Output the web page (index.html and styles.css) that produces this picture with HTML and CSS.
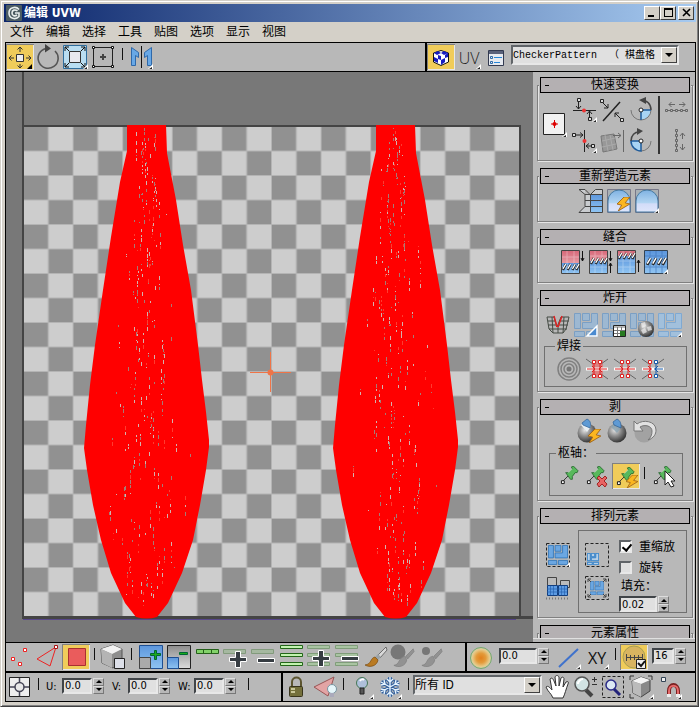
FILE: index.html
```html
<!DOCTYPE html>
<html lang="zh-CN">
<head>
<meta charset="utf-8">
<title>编辑 UVW</title>
<link rel="stylesheet" href="styles.css">
</head>
<body>
<svg class="defs" aria-hidden="true">
  <defs>
    <linearGradient id="gBlue" x1="0" y1="0" x2="0" y2="1"><stop offset="0" stop-color="#5c96dc"/><stop offset="1" stop-color="#8fc4f2"/></linearGradient>
    <linearGradient id="gDome" x1="0" y1="0" x2="0" y2="1"><stop offset="0" stop-color="#7fb2e2"/><stop offset=".6" stop-color="#b4d6f2"/><stop offset=".62" stop-color="#d2dcf8"/><stop offset="1" stop-color="#dfe6fb"/></linearGradient>
    <linearGradient id="gGrey" x1="0" y1="0" x2="0" y2="1"><stop offset="0" stop-color="#8c8c8c"/><stop offset="1" stop-color="#dcdcdc"/></linearGradient>
    <linearGradient id="gPink" x1="0" y1="0" x2="0" y2="1"><stop offset="0" stop-color="#d8697a"/><stop offset="1" stop-color="#e59aa2"/></linearGradient>
    <radialGradient id="gBall" cx=".38" cy=".35" r=".7"><stop offset="0" stop-color="#e4e4e4"/><stop offset=".5" stop-color="#858585"/><stop offset="1" stop-color="#2c2c2c"/></radialGradient>
    <radialGradient id="gSun"><stop offset="0" stop-color="#e2801c"/><stop offset=".45" stop-color="#e39a3a"/><stop offset=".8" stop-color="#e6c886"/><stop offset="1" stop-color="#c9d0b0"/></radialGradient>
    <symbol id="fly" viewBox="0 0 28 26"><path d="M26 20v5h-5z" fill="#fff"/><path d="M25 23v2h-3z" fill="#222"/></symbol>
    <symbol id="bolt" viewBox="0 0 12 12"><path d="M6 0 0 6l4 1-3 5 10-6-4-1 4-5z" fill="#fbb61f" stroke="#a3661a" stroke-width=".8"/></symbol>
    <symbol id="pin" viewBox="0 0 20 20"><path d="M2 17 9 10" stroke="#333"/><path d="M1.500 15.500h3v3h-3z" fill="#fff" stroke="#111"/><path d="M6 7l3 0 4-4-1-2 2-1 5 5-1 2-2 0-3 4 0 3-2 0z" fill="#58b95c" stroke="#1c5e25" stroke-width=".8"/><path d="m9 7 4-4" stroke="#b6eab4"/></symbol>
    <symbol id="tiles" viewBox="0 0 24 24"><path d="M.5.5h6v15h-6zM8.500.5h7v7h-7zM17.500.5h6v15h-15v-6h9zM.5 18.500h10v5h-10zM12.500 18.500h11v5h-11z"/></symbol>
    <symbol id="brush" viewBox="0 0 24 24"><path d="M22 2 14 10l2 3 7-8z" fill="#d8d8d8" stroke="#555" stroke-width=".8"/><path d="m14 9-3 3 3 3 3-3z" fill="#9ba3a8"/><path d="M11 12c-5 1-3 7-10 8 5 3 12 1 13-5z" fill="#b97a22" stroke="#7a4b10" stroke-width=".7"/></symbol>
    <symbol id="gbrush" viewBox="0 0 24 24"><path d="M22 2 14 10l2 3 7-8zM13 10c-8 2-5 9-12 10 5 3 13 1 14-6z" fill="#929292" stroke="#808080" stroke-width=".8"/></symbol>
    <symbol id="bars" viewBox="0 0 24 24"><path d="M.5 1.500h22v3H.5zM.5 9.500h22v3H.5zM.5 18.500h22v3H.5z"/></symbol>
    <symbol id="plus" viewBox="0 0 20 20"><path d="M7.500 1.500h5v6h6v4h-6v6h-5v-6h-6v-4h6z" fill="#363c42" stroke="#fff"/></symbol>
    <symbol id="minus" viewBox="0 0 20 20"><path d="M1.500 8.500h17v4h-17z" fill="#363c42" stroke="#fff"/></symbol>
    <symbol id="weld" viewBox="0 0 24 24"><path d="m1 2 7 5M23 2l-7 5M1 22l7-5M23 22l-7-5" stroke="#666" fill="none"/><path d="M1 12h22" stroke="#fff" stroke-width="3"/></symbol>
    <symbol id="stitches" viewBox="0 0 20 8"><g stroke="#222" stroke-width="2.600"><path d="m2 7 3-6M7 7l3-6M12 7l3-6M16 7l3-6"/></g><g stroke="#fff" stroke-width="1.300"><path d="m2 6 3-5M7 6l3-5M12 6l3-5M16 6l3-5"/></g></symbol>
  </defs>
</svg>

<div class="window">
  <header class="titlebar">
    <svg class="logo" viewBox="0 0 16 16"><rect width="16" height="16" rx="1" fill="#4b5b62"/><path d="M13 4.500C10 1 3 2 3 8s7 7 10 3.500V8H9M11.500 6C9 4 6 5 6 8s3 3.500 5 2" fill="none" stroke="#e8eeee" stroke-width="1.600"/></svg>
    <h1>编辑 UVW</h1>
    <div class="winbtns">
      <button aria-label="最小化"><svg viewBox="0 0 12 10"><path d="M2 7h6v2H2z"/></svg></button><button aria-label="最大化"><svg viewBox="0 0 12 10"><path d="M2 0h9v9H2zM3 2v6h7V2z" fill-rule="evenodd"/></svg></button><button class="close" aria-label="关闭"><svg viewBox="0 0 12 10"><path d="m3 1 7 7M10 1 3 8" stroke="#000" stroke-width="1.600"/></svg></button>
    </div>
  </header>
  <nav class="menu">
    <button>文件</button><button>编辑</button><button>选择</button><button>工具</button><button>贴图</button><button>选项</button><button>显示</button><button>视图</button>
  </nav>

  <main class="client">
    <div class="bar">
      <div class="group grow">
        <button class="ic on" aria-label="移动"><svg viewBox="0 0 28 26"><g stroke="#333" fill="none"><path d="M10.500 10.500h7v7h-7z" fill="#eee"/><path d="M14 8V3M14 20v4M8 14H3M20 14h5M11.500 5.500 14 3l2.500 2.500M11.500 21.500 14 24l2.500-2.500M5.500 11.500 3 14l2.500 2.500M22.500 11.500 25 14l-2.500 2.500"/></g><path d="M26 20v5h-5z"/></svg></button>
        <button class="ic" aria-label="旋转"><svg viewBox="0 0 28 26"><path d="M21 7a10 10 0 1 1-9-2.500h3" fill="none" stroke="#555" stroke-width="1.600"/><path d="m11 0 6 4.500-6 4z" fill="#444"/></svg></button>
        <button class="ic" aria-label="缩放"><svg viewBox="0 0 28 26"><path d="M1.500 1.500h23v23h-23z" fill="#b9ddf1" stroke="#2f6d9c"/><path d="M7.500 7.500h11v11h-11z" fill="#e8e8ee" stroke="#333"/><path d="m7 7-4-4M19 7l4-4M7 19l-4 4M19 19l4 4M3 7V3h4M19 3h4v4M3 19v4h4M19 23h4v-4" stroke="#111" fill="none"/><use href="#fly"/></svg></button>
        <button class="ic" aria-label="自由形式"><svg viewBox="0 0 28 26"><path d="M3.500 3.500h19v19h-19z" fill="none" stroke="#222"/><path d="M2.500 2.500h2v2h-2zM21.500 2.500h2v2h-2zM2.500 21.500h2v2h-2zM21.500 21.500h2v2h-2z" fill="#fff" stroke="#111"/><path d="M13 10v6M10 13h6" stroke="#444" stroke-width="2"/></svg></button>
        <i class="sep"></i>
        <button class="ic" aria-label="镜像"><svg viewBox="0 0 28 26"><path d="M4.500 3.500l7 5v5l-3-2v10h-4zM24.500 3.500l-7 5v5l3-2v10h4z" fill="#68a8e6" stroke="#2f69aa"/><path d="M14.500 2v22" stroke="#111"/><use href="#fly"/></svg></button>
      </div>
      <div class="group tex">
        <button class="ic on" aria-label="显示贴图"><svg viewBox="0 0 28 26"><path d="M14 6.500 21.500 9v9L14 21.500 6.500 18V9z" fill="#fff" stroke="#111"/><path d="m7 9 4-2 3 2-4 2zM14 9l3-2 4 2-4 2zM7 13l4 2v4l-4-2zM11 11l3 1v4l-3-1zM14 16l4-2v4l-4 3zM18 11l3-2v4l-3 1z" fill="#171cc0"/></svg></button>
        <button class="ic txt"><span>UV</span><svg class="over" viewBox="0 0 28 26"><use href="#fly"/></svg></button>
        <button class="ic" aria-label="列表"><svg viewBox="0 0 28 26"><path d="M5.500 6.500h15v15h-15z" fill="#e6eaf0" stroke="#333a50"/><path d="M6 7h14v3H6z" fill="#59617a"/><path d="M7.500 12.500h2v2h-2zM7.500 17.500h2v2h-2z" fill="none" stroke="#2d6aa8"/><path d="M11 13.500h8M11 18.500h6" stroke="#2686d8"/></svg></button>
        <div class="pick mono"><select aria-label="贴图"><option>CheckerPattern&nbsp; （ 棋盘格</option></select><b></b></div>
      </div>
    </div>

    <div class="work">
      <svg class="canvas" viewBox="6 72 527 570" preserveAspectRatio="xMinYMin slice">
        <defs>
          <pattern id="chk" x="24" y="127" width="49.600" height="49" patternUnits="userSpaceOnUse"><path d="M0 0h50v49H0z" fill="#b4b4b4"/><path d="M0 0h23.600v23.500H0zM25 24.500h23.600V48H25z" fill="#919191"/><path d="M25 0h23.600v23.500H25zM0 24.500h23.600V48H0z" fill="#cdcdcd"/></pattern>
          <path id="leaf" d="M127 125h39l1 28 9 47 7 45 8 45 7 55 4 35 4 32 3 28v7l-3 23-6 35-7 35-11 33-14 30-11 14q-10 3-21 0l-11-14-14-30-10-33-8-35-6-35-3-22 2-23 4-40 5-40 8-55 8-53 9-55 7-31z"/>
        </defs>
        <path d="M6 72h527v570H6z" fill="#787878"/>
        <path d="M24 127h495v490H24z" fill="url(#chk)"/>
        <g fill="#444"><path d="M22 72h2v547h-2zM22 125h499v2H22zM519 125h2v494h-2zM22 616h511v3H22z"/></g>
        <path d="M23 619.500h493" stroke="#57478a"/>
        <g fill="#f00"><use href="#leaf"/><use href="#leaf" x="249"/></g>
        <g id="speckles"></g>
        <path d="M250 372.500h41M270.500 352v40" stroke="#ef7447"/><circle cx="270.500" cy="372.500" r="3" fill="#ef7447"/>
      </svg>

      <aside class="panel">
        <section class="roll">
          <h2><button>快速变换</button></h2>
          <div class="quick">
            <button class="ic tall" aria-label="中心"><svg viewBox="0 0 28 26"><path d="M2.500 1.500h21v21h-21z" fill="#f1f1f1" stroke="#222"/><path d="M13.500 8v8M10 12h7" stroke="#d00"/><circle cx="13.500" cy="12" r="2" fill="#d00"/><use href="#fly"/></svg></button>
            <button class="ic" aria-label="水平对齐"><svg viewBox="0 0 28 26"><path d="M2 13.500h23M7.500 4v8M5 9l2.500 3L10 9M18.500 21v-7M16 17l2.500-3 2.500 3" stroke="#222" fill="none"/><path d="M6.500 1.500h3v3h-3zM17.500 20.500h3v3h-3z" fill="#ddd" stroke="#222"/><circle cx="13" cy="13.500" r="2" fill="#e33"/><use href="#fly"/></svg></button>
            <button class="ic" aria-label="线性对齐"><svg viewBox="0 0 28 26"><path d="m4 24 17-19" stroke="#222" stroke-width="1.500"/><path d="m3 5 6 6M5 11h4V7M22 22l-6-6M16 20v-4h4" stroke="#222" fill="none"/><path d="M1.500 2.500h3v3h-3zM21.500 21.500h3v3h-3z" fill="#ddd" stroke="#222"/></svg></button>
            <button class="ic" aria-label="逆时针旋转"><svg viewBox="0 0 28 26"><path d="M14 13h10a10 10 0 0 1-10 10z" fill="#a8d4f4"/><path d="M4 13a10 10 0 0 0 20 0" stroke="#777" fill="none"/><path d="M14 23V13h10" stroke="#1e5b9a" fill="none" stroke-width="1.500"/><path d="M24 13c0-6-4-10-10-10" stroke="#444" fill="none" stroke-width="1.500"/><path d="m12 3 7-3v7z" fill="#444"/><circle cx="14" cy="13" r="2" fill="#fff" stroke="#222"/></svg></button>
            <i class="vbar"></i>
            <button class="ic" aria-label="水平间隔"><svg viewBox="0 0 28 26"><g stroke="#666" fill="none"><path d="M6 7.500h6M8.500 5 6 7.500 8.500 10M16 7.500h6M19.500 5 22 7.500 19.500 10M5 13.500h18"/><path fill="#bbb" d="M2.500 12.500h2v2h-2zM7.500 12.500h2v2h-2zM12.500 12.500h2v2h-2zM17.500 12.500h2v2h-2zM22.500 12.500h2v2h-2z"/></g></svg></button>
            <button class="ic" aria-label="垂直对齐"><svg viewBox="0 0 28 26"><path d="M13.500 2v22M4 7h8M9 4.500 12 7 9 9.500M22 18h-7M18 15.500 15 18l3 2.500" stroke="#222" fill="none"/><path d="M1.500 5.500h3v3h-3zM20.500 16.500h3v3h-3z" fill="#ddd" stroke="#222"/><circle cx="13.500" cy="13" r="2" fill="#e33"/><use href="#fly"/></svg></button>
            <button class="ic" aria-label="对齐到边"><svg viewBox="0 0 28 26"><path d="m2 8 13-2 3 15-14 3z" fill="#989898" stroke="#777"/><path d="m6 7 3 16M11 7l3 15M3 13l13-3M3 19l14-3" stroke="#aaa"/><path d="M14 7.500h8M19 5l3 2.500-3 2.500M24.500 2v22" stroke="#666" fill="none"/></svg></button>
            <button class="ic" aria-label="顺时针旋转"><svg viewBox="0 0 28 26"><path d="M14 13v10A10 10 0 0 1 4 13z" fill="#a8d4f4"/><path d="M24 13a10 10 0 0 1-10 10" stroke="#777" fill="none"/><path d="M4 13a10 10 0 0 0 10 10V13z" stroke="#1e5b9a" fill="none" stroke-width="1.500"/><path d="M4 13C4 7 8 4 12 4" stroke="#444" fill="none" stroke-width="1.500"/><path d="m16 3-6-3v7z" fill="#444"/><circle cx="14" cy="13" r="2" fill="#fff" stroke="#222"/></svg></button>
            <button class="ic" aria-label="垂直间隔"><svg viewBox="0 0 28 26"><g stroke="#666" fill="none"><path d="M19.500 11V5M17 8l2.500-3L22 8M19.500 16v6M17 19l2.500 3 2.500-3M13.500 3v19"/><path fill="#bbb" d="M12.500 1.500h2v2h-2zM12.500 6.500h2v2h-2zM12.500 11.500h2v2h-2zM12.500 16.500h2v2h-2zM12.500 21.500h2v2h-2z"/></g></svg></button>
          </div>
        </section>

        <section class="roll">
          <h2><button>重新塑造元素</button></h2>
          <div class="row reshape">
            <button class="ic" aria-label="拉直"><svg viewBox="0 0 28 26"><path d="M13 6h12v18H13z" fill="url(#gBlue)"/><path d="M8 1.500 2 1.500l6 5v12l-6 6h11v-18H8M25.500 1.500h-7l-5 5h12z" fill="#d0d4d8" opacity=".7"/><path d="M2 1.500h6l5 5M25.500 1.500h-7l-5 5v18h12zM2 1.500l6 5v12l-6 6h11M8 6.500h17M8 12.500h17M8 18.500h17" fill="none" stroke="#444"/></svg></button>
            <button class="ic" aria-label="自动松弛"><svg viewBox="0 0 28 26"><path d="M2.500 1.500h23v23h-23z" fill="#a9b1b6" stroke="#778"/><path d="M3 24V13a11 11 0 0 1 22 0v11z" fill="url(#gDome)" stroke="#47799f"/><use href="#bolt" x="12" y="9" width="14" height="14"/></svg></button>
            <button class="ic" aria-label="松弛"><svg viewBox="0 0 28 26"><path d="M2.500 1.500h23v23h-23z" fill="#a9b1b6" stroke="#778"/><path d="M3 24V13a11 11 0 0 1 22 0v11z" fill="url(#gDome)" stroke="#47799f"/><use href="#fly"/></svg></button>
          </div>
        </section>

        <section class="roll">
          <h2><button>缝合</button></h2>
          <div class="row stitch">
            <button class="ic" aria-label="缝合到目标"><svg viewBox="0 0 28 26"><path d="M3 2h19v12H3z" fill="url(#gPink)"/><path d="M3 14h19v10H3z" fill="url(#gBlue)"/><path d="M9 2v22M16 2v22M3 8h19M3 18h19" stroke="#fff" opacity=".3"/><path d="M3.500 1.500h18v23h-18z" fill="none" stroke="#444"/><use href="#stitches" x="3" y="14" width="19" height="8"/><path d="M24.500 2v10M23 9l1.500 3L26 9" stroke="#111" fill="none"/></svg></button>
            <button class="ic" aria-label="缝合到平均"><svg viewBox="0 0 28 26"><path d="M3 2h19v11H3z" fill="url(#gPink)"/><path d="M3 12h19v12H3z" fill="url(#gBlue)"/><path d="M9 2v22M16 2v22M3 7h19M3 18h19" stroke="#fff" opacity=".3"/><path d="M3.500 1.500h18v23h-18z" fill="none" stroke="#444"/><use href="#stitches" x="3" y="8" width="19" height="8"/><path d="M24.500 2v10M23 9l1.500 3L26 9M24.500 24V14M23 17l1.500-3 1.500 3" stroke="#111" fill="none"/></svg></button>
            <button class="ic" aria-label="缝合到源"><svg viewBox="0 0 28 26"><path d="M3 2h19v7H3z" fill="url(#gPink)"/><path d="M3 7h19v17H3z" fill="url(#gBlue)"/><path d="M9 2v22M16 2v22M3 12h19M3 18h19" stroke="#fff" opacity=".3"/><path d="M3.500 1.500h18v23h-18z" fill="none" stroke="#444"/><use href="#stitches" x="3" y="3" width="19" height="8"/><path d="M24.500 23V11M23 14l1.500-3 1.500 3" stroke="#111" fill="none"/></svg></button>
            <button class="ic" aria-label="缝合自定义"><svg viewBox="0 0 28 26"><path d="M2.500 1.500h23v23h-23z" fill="url(#gBlue)" stroke="#345"/><path d="M8 2v22M14 2v22M20 2v22M3 7h22M3 18h22" stroke="#3a70b8" opacity=".6"/><use href="#stitches" x="3" y="8" width="22" height="9"/><use href="#fly"/></svg></button>
          </div>
        </section>

        <section class="roll">
          <h2><button>炸开</button></h2>
          <div class="row explode">
            <button class="ic" aria-label="断开"><svg viewBox="0 0 28 26"><path d="M3 5h7l3 10 4-10h8l-3 12-3 4H9l-4-4zM4 9h7M4 13h8M5 17h18M16 9h9M15 13h9M8 5l1 16M14 14v7M20 5l-1 16" fill="none" stroke="#444b44"/><path d="m10 4 3 11M18 4l-4 11" stroke="#d22" stroke-width="1.500"/></svg></button>
            <button class="ic" aria-label="按多边形角度展平"><svg viewBox="0 0 28 26"><use href="#tiles" x="2" y="1" width="24" height="24" fill="#9db8d2" stroke="#7b9fc4"/><path d="m15 24 10-10v10z" fill="#4a8ad0" stroke="#fff" stroke-width="1.500"/></svg></button>
            <button class="ic" aria-label="按平滑组展平"><svg viewBox="0 0 28 26"><use href="#tiles" x="2" y="1" width="24" height="24" fill="#9db8d2" stroke="#7b9fc4"/><path d="M13.500 13.500h12v11h-12z" fill="#fff" stroke="#222"/><path d="M14 14h11v2H14z" fill="#bbb"/><path d="M17.500 15v9M21.500 15v9M14 18.500h11M14 21.500h11" stroke="#777"/><path d="M20 19h5v5h-5z" fill="#287a20"/></svg></button>
            <button class="ic" aria-label="按材质展平"><svg viewBox="0 0 28 26"><use href="#tiles" x="2" y="1" width="24" height="24" fill="#9db8d2" stroke="#7b9fc4"/><circle cx="18" cy="17" r="8" fill="url(#gBall)"/><path d="m13 11 4-1 1 4-4 2zM19 15l4-1 1 4-4 1zM13 18l4-2 2 4-4 2z" fill="#eee" opacity=".7"/></svg></button>
            <button class="ic" aria-label="展平自定义"><svg viewBox="0 0 28 26"><use href="#tiles" x="2" y="1" width="24" height="24" fill="#a2c0dc" stroke="#7fa9d2"/><use href="#fly"/></svg></button>
          </div>
          <fieldset class="weld"><legend>焊接</legend>
            <button class="ic" aria-label="目标焊接"><svg viewBox="0 0 28 26"><g fill="none" stroke="#808080" stroke-width="1.500"><circle cx="14" cy="13" r="11"/><circle cx="14" cy="13" r="8"/><circle cx="14" cy="13" r="5"/></g><circle cx="14" cy="13" r="2.500" fill="#777"/></svg></button>
            <button class="ic" aria-label="焊接选定项"><svg viewBox="0 0 28 26"><path d="M9 4h11v18H9z" fill="#dc8080"/><use href="#weld" x="2" y="1" width="24" height="24"/><path d="M4 13h20M9 10l3 3-3 3M19 10l-3 3 3 3M11 6v14M17 6v14" stroke="#e02020" fill="none"/><path d="M9.500 4.500h3v3h-3zM15.500 4.500h3v3h-3zM9.500 18.500h3v3h-3zM15.500 18.500h3v3h-3z" fill="#fff" stroke="#d22"/></svg></button>
            <button class="ic" aria-label="焊接所有选定接缝"><svg viewBox="0 0 28 26"><use href="#weld" x="2" y="1" width="24" height="24"/><path d="M4 13h20M9 10l3 3-3 3M19 10l-3 3 3 3M11 6v14M17 6v14" stroke="#e02020" fill="none"/><path d="M9.500 4.500h3v3h-3zM15.500 4.500h3v3h-3zM9.500 18.500h3v3h-3zM15.500 18.500h3v3h-3z" fill="#fff" stroke="#d22"/></svg></button>
            <button class="ic" aria-label="焊接任意"><svg viewBox="0 0 28 26"><use href="#weld" x="2" y="1" width="24" height="24"/><path d="M4 13h9M9 10l3 3-3 3M11 6v14" stroke="#e02020" fill="none"/><path d="M24 13h-9M19 10l-3 3 3 3M17 6v14" stroke="#1558a8" fill="none"/><path d="M9.500 4.500h3v3h-3zM9.500 18.500h3v3h-3z" fill="#fff" stroke="#d22"/><path d="M15.500 4.500h3v3h-3zM15.500 18.500h3v3h-3z" fill="#fff" stroke="#1558a8"/></svg></button>
          </fieldset>
        </section>

        <section class="roll">
          <h2><button>剥</button></h2>
          <div class="row peel">
            <button class="ic" aria-label="快速剥"><svg viewBox="0 0 28 26"><circle cx="12" cy="15" r="9.500" fill="url(#gBall)"/><path d="m6 7 5-5c4 1 6 4 4 8l-3 4z" fill="#e8eef2"/><path d="m7 5 5-4c4 2 4 5 3 9L8 7z" fill="#5e9ad4" stroke="#2c5f94" stroke-width=".7"/><use href="#bolt" x="13" y="11" width="14" height="14"/></svg></button>
            <button class="ic" aria-label="剥模式"><svg viewBox="0 0 28 26"><circle cx="14" cy="15" r="9.500" fill="url(#gBall)"/><path d="m8 9 6-7c3 2 5 5 3 9l-3 4z" fill="#89a3b0" opacity=".8"/><path d="m10 4 4-3c4 2 4 5 4 9l-7-3z" fill="#5e9ad4" stroke="#2c5f94" stroke-width=".7"/></svg></button>
            <button class="ic" aria-label="重置剥"><svg viewBox="0 0 28 26"><circle cx="13" cy="15" r="9.500" fill="#999" opacity=".7"/><path d="M3 3v10h9L9 9c5-3 12-1 12 4 0 4-1 6-4 9 6-2 8-6 8-10C25 3 12 1 6 6z" fill="#e2e2e2" stroke="#777"/></svg></button>
          </div>
          <fieldset class="pivot"><legend>枢轴：</legend>
            <button class="ic" aria-label="锁定枢轴"><svg viewBox="0 0 28 26"><use href="#pin" x="4" y="3" width="19" height="19"/></svg></button>
            <button class="ic" aria-label="解除枢轴"><svg viewBox="0 0 28 26"><use href="#pin" x="2" y="3" width="19" height="19"/><path d="m13 15 2-2 3 3 3-3 2 2-3 3 3 3-2 3-3-3-3 3-2-3 3-3z" fill="#e86464" stroke="#a12323"/></svg></button>
            <button class="ic on" aria-label="自动枢轴"><svg viewBox="0 0 28 26"><use href="#pin" x="4" y="4" width="19" height="19"/><use href="#bolt" x="14" y="12" width="13" height="13"/></svg></button>
            <i class="sep"></i>
            <button class="ic" aria-label="选择枢轴"><svg viewBox="0 0 28 26"><use href="#pin" x="4" y="3" width="19" height="19"/><path d="M16 8v14l3-3 3 5 3-1-3-5h4z" fill="#fff" stroke="#222"/></svg></button>
          </fieldset>
        </section>

        <section class="roll">
          <h2><button>排列元素</button></h2>
          <div class="pack">
            <div class="col">
              <button class="ic" aria-label="紧缩自定义"><svg viewBox="0 0 28 26"><path d="M2.500 1.500h23v23h-23z" fill="none" stroke="#222" stroke-dasharray="3 2"/><use href="#tiles" x="4" y="3" width="20" height="20" fill="#6ba7e2" stroke="#2e73b8"/><use href="#fly"/></svg></button>
              <button class="ic" aria-label="重缩放元素"><svg viewBox="0 0 28 26"><path d="M3.500 2.500h9v8h-9zM16.500 5.500h9v7h-9z" fill="#bbb" stroke="#444"/><path d="M3.500 10.500h10v10h-10zM14.500 10.500h9v10h-9z" fill="#5d9ce4" stroke="#123f80"/><path d="M3 14h20M3 17h20M6.500 11v9M9.500 11v9M17.500 11v9M20.500 11v9" stroke="#2562b0" stroke-width=".7"/><path d="M2 23.500h24" stroke="#777" stroke-width="2" stroke-dasharray="1 2"/></svg></button>
            </div>
            <div class="box">
              <div class="col">
                <button class="ic" aria-label="紧缩一起"><svg viewBox="0 0 28 26"><path d="M2.500 1.500h23v23h-23z" fill="none" stroke="#222" stroke-dasharray="3 2"/><use href="#tiles" x="4" y="11" width="12" height="12" fill="#b6cfe6" stroke="#2e80cc" stroke-width="2"/></svg></button>
                <button class="ic" aria-label="紧缩规格化"><svg viewBox="0 0 28 26"><path d="M2.500 1.500h23v23h-23z" fill="none" stroke="#222" stroke-dasharray="3 2"/><use href="#tiles" x="7" y="6" width="14" height="14" fill="#6ba7e2" stroke="#2e73b8"/><path d="m5 4 3 3M23 4l-3 3M5 22l3-3M23 22l-3-3M5 7V4h3M20 4h3v3M5 19v3h3M23 19v3h-3" fill="none" stroke="#444"/></svg></button>
              </div>
              <div class="opts">
                <label><input type="checkbox" checked>重缩放</label>
                <label><input type="checkbox">旋转</label>
                <label for="pad" class="cap">填充：</label>
                <span class="spin wide"><input id="pad" type="text" value="0.02"><span class="ud"><button aria-label="增大"></button><button aria-label="减小"></button></span></span>
              </div>
            </div>
          </div>
        </section>

        <section class="roll"><h2><button>元素属性</button></h2><div class="row"></div></section>
      </aside>
    </div>

    <div class="bar thick">
      <div class="group grow">
        <button class="ic" aria-label="顶点"><svg viewBox="0 0 28 26"><path d="M17.500 4.500h3v3h-3zM5.500 13.500h3v3h-3zM12.500 18.500h3v3h-3z" fill="#fff" stroke="#e22"/></svg></button>
        <button class="ic" aria-label="边"><svg viewBox="0 0 28 26"><path d="M22 3 3 15l13 7z" fill="none" stroke="#e22"/><path d="M20.500 1.500h3v3h-3z" fill="#fff" stroke="#a11"/></svg></button>
        <button class="ic on" aria-label="多边形"><svg viewBox="0 0 28 26"><path d="M6.500 4.500h17v17h-17z" fill="#ea5c5c" stroke="#a83030"/></svg></button>
        <i class="sep"></i>
        <button class="ic" aria-label="按元素选择"><svg viewBox="0 0 28 26"><path d="m2 5 12-4 9 4v13l-9 6-11-5z" fill="#8e8e8e" stroke="#555"/><path d="m2 5 12-4 9 4-10 5z" fill="#f2f2f2"/><path d="M2 5l11 5v14L3 19z" fill="#b4b4b4"/><path d="M15.500 14.500h10v10h-10z" fill="#dcdfe8" stroke="#222"/></svg></button>
        <i class="sep"></i>
        <button class="ic" aria-label="扩大选择"><svg viewBox="0 0 28 26"><path d="M3.500 1.500h23v23h-23z" fill="url(#gBlue)" stroke="#1e4f92"/><path d="M3.500 13.500h11v11h-11z" fill="#aaa" stroke="#444"/><path d="M18.500 6.500h2v3h4v2h-4v4h-2v-4h-4v-2h4z" fill="#1cab1c" stroke="#063"/></svg></button>
        <button class="ic" aria-label="收缩选择"><svg viewBox="0 0 28 26"><path d="M3.500 1.500h23v23h-23z" fill="url(#gGrey)" stroke="#222"/><path d="M3.500 13.500h11v11h-11z" fill="url(#gBlue)" stroke="#1e4f92"/><path d="M15.500 8.500h8v2h-8z" fill="#1cab1c" stroke="#063"/></svg></button>
        <button class="ic" aria-label="循环边"><svg viewBox="0 0 28 26"><path d="M4.500 5.500h22v4h-22z" fill="#82d26a" stroke="#25601a"/><path d="M11.500 5v5M19.500 5v5" stroke="#25601a"/></svg></button>
        <button class="ic" aria-label="扩大循环"><svg viewBox="0 0 28 26"><path d="M3.500 5.500h22v4h-22z" fill="#a5b8a0" stroke="#829a7c"/><use href="#plus" x="8" y="6" width="20" height="20"/></svg></button>
        <button class="ic" aria-label="收缩循环"><svg viewBox="0 0 28 26"><path d="M3.500 5.500h22v4h-22z" fill="#a5b8a0" stroke="#829a7c"/><use href="#minus" x="8" y="6" width="20" height="20"/></svg></button>
        <button class="ic" aria-label="环形边"><svg viewBox="0 0 28 26"><use href="#bars" x="4" y="0" width="24" height="24" fill="#c2f2b0" stroke="#226618"/></svg></button>
        <button class="ic" aria-label="扩大环形"><svg viewBox="0 0 28 26"><use href="#bars" x="3" y="0" width="24" height="24" fill="#a9c4a2" stroke="#7f9c79"/><use href="#plus" x="7" y="5" width="20" height="20"/></svg></button>
        <button class="ic" aria-label="收缩环形"><svg viewBox="0 0 28 26"><use href="#bars" x="3" y="0" width="24" height="24" fill="#a9c4a2" stroke="#7f9c79"/><use href="#minus" x="8" y="4" width="20" height="20"/></svg></button>
        <button class="ic" aria-label="绘制选择"><svg viewBox="0 0 28 26"><use href="#brush" x="4" y="1" width="24" height="24"/></svg></button>
        <button class="ic" aria-label="放大画笔"><svg viewBox="0 0 28 26"><circle cx="10" cy="8" r="7.500" fill="#777"/><use href="#gbrush" x="5" y="3" width="22" height="22"/></svg></button>
        <button class="ic" aria-label="缩小画笔"><svg viewBox="0 0 28 26"><circle cx="10" cy="7" r="4" fill="#777"/><use href="#gbrush" x="5" y="3" width="22" height="22"/></svg></button>
      </div>
      <div class="group soft">
        <button class="ic" aria-label="软选择"><svg viewBox="0 0 28 26"><circle cx="14" cy="14" r="10.500" fill="url(#gSun)" stroke="#76a86e"/></svg></button>
        <span class="spin wide"><input type="text" aria-label="衰减" value="0.0"><span class="ud"><button aria-label="增大"></button><button aria-label="减小"></button></span></span>
        <button class="ic line" aria-label="线性衰减"><svg viewBox="0 0 28 26"><path d="M4 23 23 5" stroke="#3f72cc" stroke-width="2"/><use href="#fly"/></svg></button>
        <button class="ic txt dark"><span>XY</span><svg class="over" viewBox="0 0 28 26"><use href="#fly"/></svg></button>
        <i class="sep"></i>
        <button class="ic on" aria-label="边距离"><svg viewBox="0 0 28 26"><circle cx="14" cy="13" r="11" fill="#d8b460" stroke="#a9a050"/><path d="M6 13.500h16M6.500 10v7M10.500 11v5M14.500 11v5M18.500 11v5M22.500 10v7" stroke="#444"/><path d="M16.500 15.500h9v9h-9z" fill="#eee" stroke="#222"/><path d="m18 19 3 3 4-5" stroke="#111" stroke-width="2" fill="none"/></svg></button>
        <span class="spin narrow"><input type="text" aria-label="步数" value="16"><span class="ud"><button aria-label="增大"></button><button aria-label="减小"></button></span></span>
      </div>
    </div>

    <div class="bar status">
      <div class="group coords">
        <button class="ic" aria-label="绝对模式"><svg viewBox="0 0 28 26"><path d="M3.500 3.500h20v19h-20z" fill="#eee" stroke="#222"/><path d="M13.500 4v18M4 13h19" stroke="#445" stroke-width="1.500"/><circle cx="13.500" cy="13" r="4.500" fill="#e8e8e8" stroke="#445" stroke-width="1.500"/></svg></button>
        <i class="sep"></i>
        <label>U:<span class="spin"><input type="text" value="0.0"><span class="ud"><button type="button" aria-label="U 增大"></button><button type="button" aria-label="U 减小"></button></span></span></label>
        <label>V:<span class="spin"><input type="text" value="0.0"><span class="ud"><button type="button" aria-label="V 增大"></button><button type="button" aria-label="V 减小"></button></span></span></label>
        <label>W:<span class="spin"><input type="text" value="0.0"><span class="ud"><button type="button" aria-label="W 增大"></button><button type="button" aria-label="W 减小"></button></span></span></label>
        <i class="sep"></i>
      </div>
      <div class="group view">
        <button class="ic" aria-label="锁定"><svg viewBox="0 0 28 26"><path d="M9 13V8c0-6 9-6 9 0v5" fill="none" stroke="#5c5530" stroke-width="2"/><rect x="6.500" y="12.500" width="13" height="10" rx="1" fill="#74703c" stroke="#38341c"/><path d="M8 15h4M8 18h4" stroke="#c9c69a" stroke-width="2"/></svg></button>
        <button class="ic" aria-label="过滤面"><svg viewBox="0 0 28 26"><path d="M23 3 3 13l14 9z" fill="#e2a4a4" stroke="#955"/><circle cx="21" cy="15" r="4.500" fill="#e6f6fa" stroke="#7794a0"/><path d="M19 19h4v4h-4z" fill="#aab"/></svg></button>
        <i class="sep"></i>
        <button class="ic" aria-label="隐藏"><svg viewBox="0 0 28 26"><circle cx="14" cy="9" r="5.500" fill="#aebfda" stroke="#475"/><path d="M12 7c1-2 3-2 4-1" stroke="#fff" stroke-width="2" fill="none"/><path d="M12 14h4v6h-4z" fill="#555" stroke="#222"/><use href="#fly"/></svg></button>
        <button class="ic" aria-label="冻结"><svg viewBox="0 0 28 26"><g stroke="#315f9c" stroke-width="3.500" fill="none"><path d="M14 3v20M5 8l18 10M5 18 23 8M11 5l3 3 3-3M11 21l3-3 3 3M5 11l4-1-1-4M23 15l-4 1 1 4M5 15l4 1-1 4M23 11l-4-1 1-4"/></g><g stroke="#e6f4ff" stroke-width="1.400" fill="none"><path d="M14 3v20M5 8l18 10M5 18 23 8M11 5l3 3 3-3M11 21l3-3 3 3M5 11l4-1-1-4M23 15l-4 1 1 4M5 15l4 1-1 4M23 11l-4-1 1-4"/></g><use href="#fly"/></svg></button>
        <i class="sep"></i>
        <div class="pick ids"><select aria-label="材质 ID"><option>所有 ID</option></select><b></b></div>
        <button class="ic" aria-label="平移"><svg viewBox="0 0 28 26"><path d="M9 24c-2-5-5-6-7-11 2-2 4 1 6 3L6 5c2-2 3 0 4 2l2 5-1-9c1-2 3-2 4 0v9l2-8c2-2 3 0 3 1l-1 8 3-5c2-1 3 0 2 2-2 5-3 10-5 14z" fill="#fff" stroke="#333"/></svg></button>
        <button class="ic" aria-label="缩放视图"><svg viewBox="0 0 28 26"><path d="m14 16 6 6" stroke="#444" stroke-width="4"/><circle cx="10" cy="10" r="7" fill="#d2e4e4" stroke="#555" stroke-width="1.500"/><path d="M6 10c0-3 3-5 5-5" stroke="#fff" stroke-width="2" fill="none"/><path d="M20 5.500h5M22.500 3v5M20 10.500h5" stroke="#333"/></svg></button>
        <button class="ic" aria-label="缩放区域"><svg viewBox="0 0 28 26"><path d="M2.500 2.500h21v21h-21z" fill="none" stroke="#222" stroke-dasharray="3 2"/><path d="m14 15 6 6" stroke="#23237a" stroke-width="3"/><circle cx="11" cy="11" r="5" fill="#dce8f4" stroke="#2b2b88" stroke-width="1.500"/></svg></button>
        <button class="ic" aria-label="最大化显示"><svg viewBox="0 0 28 26"><path d="m4 7 9-4 9 3v11l-9 6-8-4z" fill="#888" stroke="#444"/><path d="m4 7 9-4 9 3-9 4z" fill="#f4f4f4"/><path d="m4 7 9 3v13l-8-4z" fill="#bbb"/><path d="M2 6V2h4M20 2h4v4M2 20v4h4" stroke="#333" fill="none"/><use href="#fly"/></svg></button>
        <button class="ic" aria-label="捕捉"><svg viewBox="0 0 28 26"><path d="M5.500 3.500h4v4h-4z" fill="#eee" stroke="#345"/><path d="M13 23v-6c0-8 9-8 9 0v6" fill="none" stroke="#7b2020" stroke-width="4"/><path d="M13 20v-3c0-7 9-7 9 0v3" fill="none" stroke="#e56b6b" stroke-width="2"/><path d="M11 20h4v3h-4zM20 20h4v3h-4z" fill="#eee"/><use href="#fly"/></svg></button>
      </div>
    </div>
  </main>
</div>
<script src="speckles.js"></script>
</body>
</html>
```
FILE: speckles.js
```js
// Small gaps in the dense wireframe, seeded so every load draws the same mesh.
(function () {
  var seed = 4127;
  function rnd() {
    seed = (seed * 16807) % 2147483647;
    return seed / 2147483647;
  }
  function half(y) {
    if (y < 153) return 18;
    if (y < 447) return 19 + (y - 153) * 43 / 294;
    return 62 * Math.sqrt(Math.max(0, 1 - Math.pow((y - 440) / 180, 2)));
  }
  var light = "", dark = "", red = "";
  [147, 396].forEach(function (cx) {
    for (var i = 0; i < 190; i++) {
      // Stratified rows keep the gaps spread over the full height.
      var top = 128 + Math.floor((i + rnd()) * 470 / 190);
      var t = rnd() < 0.6 ? (rnd() - 0.5) * 0.8 : (rnd() - 0.5) * 1.4;
      var x = Math.round(cx + t * half(top));
      var run = 1 + Math.floor(rnd() * 3);
      // Gaps come in short vertical runs along one mesh line.
      for (var j = 0; j < run; j++) {
        var h = 1 + Math.floor(rnd() * 4);
        var d = "M" + x + " " + top + "h1v" + h + "h-1z";
        var k = rnd();
        if (k < 0.4) light += d; else if (k < 0.75) dark += d; else red += d;
        top += h + 1 + Math.floor(rnd() * 5);
        if (top > 608) break;
      }
    }
  });
  document.getElementById("speckles").innerHTML =
    '<path fill="#d3b3ae" d="' + light + '"/><path fill="#a57b76" d="' + dark + '"/><path fill="#ff3b30" d="' + red + '"/>';
})();
```
FILE: styles.css
```css
* { box-sizing: border-box; }
body {
  margin: 0;
  height: 100vh;
  overflow: hidden;
  background: #d4d0c8;
  font: 12px/16px "DejaVu Sans Condensed", "Noto Sans CJK SC", sans-serif;
  color: #000;
}
.defs { position: absolute; width: 0; height: 0; }
button, input, select { font: inherit; color: inherit; margin: 0; padding: 0; border: 0; background: none; border-radius: 0; }
svg { display: block; }
h1, h2 { margin: 0; }

.window {
  height: 100%;
  display: flex;
  flex-direction: column;
  border: 1px solid;
  border-color: #d4d0c8 #404040 #404040 #d4d0c8;
  box-shadow: inset 1px 1px #fff, inset -1px -1px #808080;
  padding: 3px 2px 4px 3px;
}
.titlebar {
  display: flex;
  align-items: center;
  height: 18px;
  padding: 0 2px;
  background: linear-gradient(90deg, #0a246a, #a6caf0);
}
.logo { width: 16px; height: 16px; margin-right: 2px; }
.titlebar h1 { flex: 1; color: #fff; font: bold 12px/18px "DejaVu Sans Condensed", "Noto Sans CJK SC", sans-serif; }
.winbtns { display: flex; }
.winbtns button {
  width: 16px; height: 14px;
  padding: 1px;
  background: #d4d0c8;
  border: 1px solid;
  border-color: #fff #404040 #404040 #fff;
}
.winbtns svg { width: 12px; height: 10px; }
.winbtns .close { margin-left: 2px; }
.menu { display: flex; gap: 12px; height: 20px; padding: 0 6px; }
.menu button { line-height: 20px; }

.client {
  flex: 1;
  min-height: 0;
  display: flex;
  flex-direction: column;
  margin-left: 1px;
  border: 1px solid #000;
  background: #b8b8b8;
}
.bar { display: flex; height: 29px; border-bottom: 1px solid #000; }
.bar.thick { height: 31px; border-top: 1px solid #000; border-bottom-width: 2px; }
.bar.status { height: 28px; border: 0; }
.group { display: flex; align-items: center; min-width: 0; }
.grow { flex: 1; }
.group + .group { border-left: 2px solid #000; }
.tex { width: 270px; }
.soft { width: 230px; }
.ic { position: relative; flex: none; width: 28px; height: 26px; }
.ic svg { width: 28px; height: 26px; }
.on {
  background: #f0cc5a;
  box-shadow: inset 1px 1px #808080, inset -1px -1px #e8e8e8;
}
.sep { flex: none; width: 9px; height: 12px; margin-bottom: 6px; background: linear-gradient(#111, #111) 4px 0 / 1px 100% no-repeat; }
.txt { font: 300 16px/28px "Open Sans", sans-serif; color: #222; }
.txt span { display: block; text-align: center; height: 26px; }
.txt .over { position: absolute; left: 0; top: 0; }
.dark { font-weight: 400; color: #111; }

.pick {
  position: relative;
  display: flex;
  height: 20px;
  background: #e0e0e0;
  border: 2px solid;
  border-color: #606468 #e8e8e8 #e8e8e8 #606468;
}
.pick select { width: 100%; appearance: none; padding-right: 16px; outline: 0; line-height: 16px; }
.pick b {
  position: absolute;
  right: 0; top: 0; bottom: 0;
  width: 16px;
  background: #d4d0c8;
  border: 1px solid;
  border-color: #fff #404040 #404040 #fff;
  pointer-events: none;
}
.pick b::after { content: ""; position: absolute; left: 3px; top: 5px; border: 4px solid transparent; border-top-color: #000; border-bottom: 0; }
.mono { width: 168px; margin: 0 0 4px; }
.mono select { font: 10px/16px "Liberation Mono", "Noto Sans CJK SC", monospace; padding-top: 1px; }
.ids { width: 129px; margin: 0 2px 4px 0; }

.work { flex: 1; min-height: 0; display: flex; }
.canvas { flex: 1; min-width: 0; height: 100%; background: #787878; }
.panel {
  flex: none;
  width: 162px;
  overflow: hidden;
  margin-bottom: 3px;
  padding: 13px 2px 0 4px;
  border-bottom: 1px solid #e0e0e0;
}
.roll {
  border: 1px solid #808080;
  box-shadow: 1px 1px #e4e4e4, inset 1px 1px #e4e4e4;
  margin-bottom: 15px;
  padding-bottom: 4px;
}
.roll h2 { margin: -9px 2px 0; background: #b8b8b8; outline: 1px solid #b8b8b8; }
.roll h2 button {
  position: relative;
  display: block;
  width: 100%;
  height: 16px;
  border: 1px solid #000;
  background: #b4b0b2;
  font-size: 12px; line-height: 14px; font-weight: normal;
}
.roll h2 button::before { content: ""; position: absolute; left: 4px; top: 7px; width: 4px; height: 1px; background: #000; }
.row { display: flex; }
.quick {
  display: grid;
  grid-template: 31px 31px / 32px 28px 28px 28px 8px 28px;
  align-items: center;
  justify-items: center;
  padding: 1px 0 0 1px;
}
.quick .tall { grid-row: span 2; }
.vbar { grid-row: span 2; width: 2px; height: 58px; background: #333; }
.reshape { padding: 4px 0 3px 39px; }
.stitch { padding: 4px 0 3px 20px; }
.explode { padding: 6px 0 0 6px; }
.peel { padding: 3px 0 1px 37px; }
fieldset {
  display: flex;
  align-items: center;
  margin: 0;
  min-width: 0;
  padding: 2px 8px 4px;
  border: 1px solid #707070;
}
legend { line-height: 16px; padding: 0 2px; }
legend, .opts .cap { font-family: "DejaVu Sans Condensed", "Noto Sans CJK TC", sans-serif; }
.weld { margin: 0 5px 0 6px; padding-left: 10px; }
.pivot { margin: 0 9px 0 11px; padding: 2px 6px 6px; }
.pack { display: flex; gap: 6px; padding: 6px 5px 0 6px; }
.col { display: flex; flex-direction: column; gap: 7px; padding-top: 12px; }
.box { flex: 1; display: flex; gap: 8px; padding: 0 4px; border: 1px solid #707070; }
.box .col { margin-top: -1px; }
.opts { display: flex; flex-direction: column; padding: 5px 0 0; white-space: nowrap; }
.opts label { display: flex; align-items: center; gap: 7px; height: 21px; line-height: 16px; }
.opts .cap { height: 16px; padding-left: 2px; margin-bottom: 2px; }
input[type="checkbox"] {
  appearance: none;
  width: 13px; height: 13px;
  background: #e0e0e0;
  border: 2px solid;
  border-color: #606468 #e8e8e8 #e8e8e8 #606468;
}
input[type="checkbox"]:checked { background: #fff; position: relative; }
input[type="checkbox"]:checked::after {
  content: "";
  position: absolute;
  left: 3px; top: 0;
  width: 4px; height: 7px;
  border: solid #000;
  border-width: 0 2px 2px 0;
  transform: rotate(40deg);
}
.spin { display: inline-flex; gap: 1px; }
.spin input {
  width: 30px; height: 16px;
  padding-left: 1px;
  background: #e0e0e0;
  border: 2px solid;
  border-color: #404448 #e8e8e8 #e8e8e8 #404448;
  font: 11px/12px "DejaVu Sans Condensed", sans-serif;
}
.wide input { width: 38px; }
.narrow input { width: 22px; }
.ud { display: flex; flex-direction: column; }
.ud button {
  width: 11px; height: 8px;
  border: 1px solid;
  border-color: #ddd #777 #777 #ddd;
  display: grid;
  place-items: center;
}
.ud button::after { content: ""; border: 3px solid transparent; border-top: 0; border-bottom-color: #000; }
.ud button + button::after { border: 3px solid transparent; border-bottom: 0; border-top-color: #000; }
.bar .spin { margin-bottom: 3px; }
.soft .wide { margin-left: 4px; }
.soft .line { margin-left: 6px; }
.soft .narrow { margin-left: 4px; }
.coords { width: 275px; }
.coords label { display: flex; align-items: center; justify-content: space-between; width: 58px; margin-right: 8px; font: 11px/16px "DejaVu Sans Condensed", sans-serif; }
.coords .sep + label { margin-left: 3px; }
.view { flex: 1; }
```
